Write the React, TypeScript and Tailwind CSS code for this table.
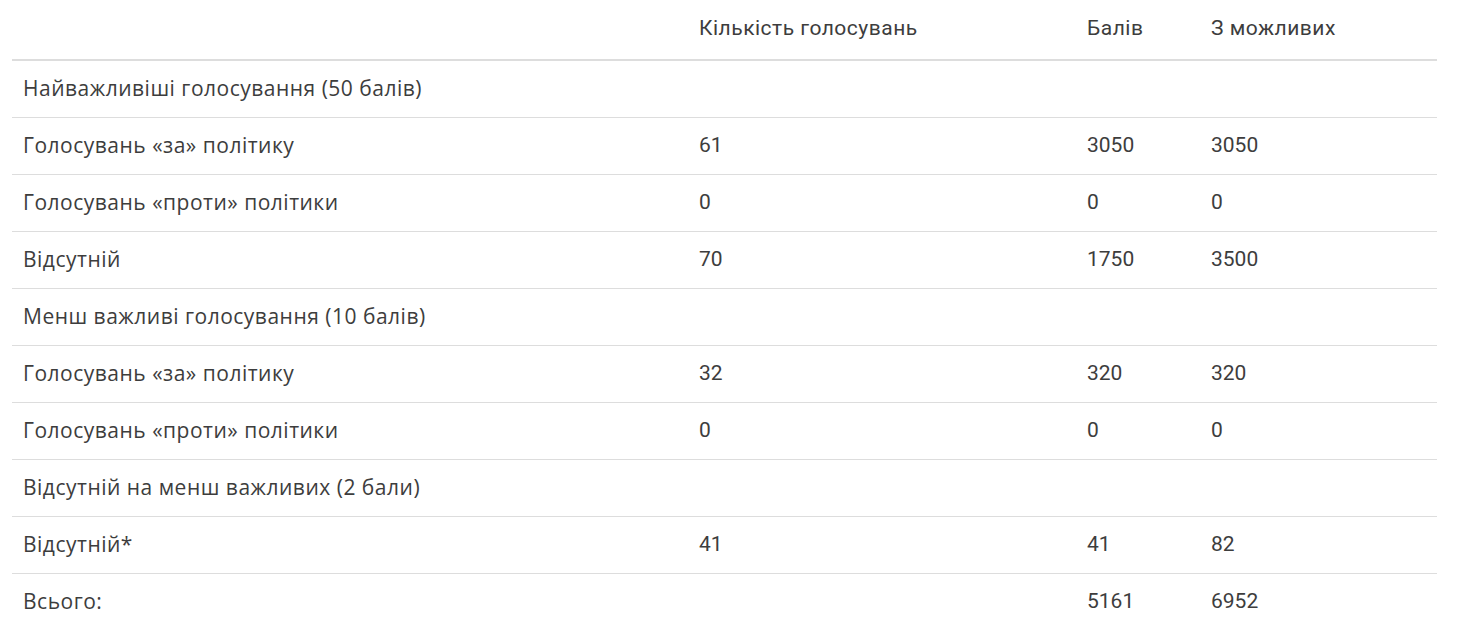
import React from "react";

const rows: { label: string; a?: string; b?: string; c?: string }[] = [
  { label: "Найважливіші голосування (50 балів)" },
  { label: "Голосувань «за» політику", a: "61", b: "3050", c: "3050" },
  { label: "Голосувань «проти» політики", a: "0", b: "0", c: "0" },
  { label: "Відсутній", a: "70", b: "1750", c: "3500" },
  { label: "Менш важливі голосування (10 балів)" },
  { label: "Голосувань «за» політику", a: "32", b: "320", c: "320" },
  { label: "Голосувань «проти» політики", a: "0", b: "0", c: "0" },
  { label: "Відсутній на менш важливих (2 бали)" },
  { label: "Відсутній*", a: "41", b: "41", c: "82" },
  { label: "Всього:", b: "5161", c: "6952" },
];

const grid = "grid grid-cols-[676px_388px_124px_237px] items-center";
const head = "px-[11px] font-['Roboto',sans-serif] text-[21px] tracking-[0.5px]";
const num = "px-[11px] font-['Roboto',sans-serif] text-[21px]";

export default function App() {
  return (
    <div className="bg-white w-[1462px] h-[626px] overflow-hidden px-[12px] text-[#3d3d3d] font-['Open_Sans',sans-serif]">
      <div className="w-[1425px]">
        <div className={`${grid} h-[61px] pb-[1px] border-b-2 border-[#dddddd]`}>
          <div className="px-[11px]"></div>
          <div className={head}>Кількість голосувань</div>
          <div className={head}>Балів</div>
          <div className={head}>З можливих</div>
        </div>
        {rows.map((r, i) => (
          <div key={i} className={`${grid} h-[57px] border-b border-[#dddddd]`}>
            <div className="px-[11px] text-[21px] tracking-[0.5px]">{r.label}</div>
            <div className={num}>{r.a ?? ""}</div>
            <div className={num}>{r.b ?? ""}</div>
            <div className={num}>{r.c ?? ""}</div>
          </div>
        ))}
      </div>
    </div>
  );
}
